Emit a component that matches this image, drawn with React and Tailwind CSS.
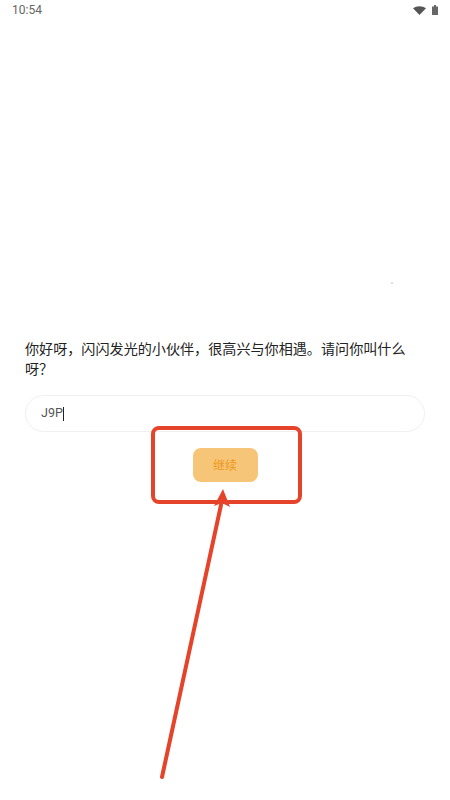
const App = () => {
  return (
    <div className="relative w-[450px] h-[800px] bg-white overflow-hidden font-['Roboto','Noto_Sans_CJK_SC',sans-serif]">
      {/* status bar */}
      <div className="flex items-center justify-between h-5 pl-3 pr-3 text-[#666666] text-xs">
        <span>10:54</span>
        <div className="flex items-center gap-[6px]">
          <svg width="13" height="9" viewBox="0 0 13 9">
            <path d="M0 2.3 C3.5 -0.6 9.5 -0.6 13 2.3 L6.5 9 Z" fill="#555555" />
          </svg>
          <svg width="6" height="10" viewBox="0 0 6 10">
            <path d="M2 0 H4 V1.5 H6 V10 H0 V1.5 H2 Z" fill="#666666" />
          </svg>
        </div>
      </div>

      <div className="px-[25px] pt-[320px]">
        <p className="text-[14.1px] leading-5 text-[#222222] -mt-px">
          你好呀，闪闪发光的小伙伴，很高兴与你相遇。请问你叫什么呀？
        </p>

        <div className="flex items-center h-[37px] mt-4 pl-[15px] rounded-full border border-[#f0f0f0] text-[12.5px] text-[#555555]">
          J9P
          <span className="w-[1.5px] h-[14px] bg-[#222222]"></span>
        </div>

        <div className="flex justify-center mt-4">
          <button className="w-[65px] h-[34px] pt-[2px] rounded-lg bg-[#f6c578] text-xs text-[#ee9a20]">
            继续
          </button>
        </div>
      </div>

      {/* red annotation */}
      <div className="absolute left-[151px] top-[426px] w-[151px] h-[78px] rounded-lg border-4 border-[#e5432a]"></div>
      <svg className="absolute inset-0" width="450" height="800" viewBox="0 0 450 800">
        <path d="M162 777 L221 505" stroke="#e5432a" strokeWidth="4" strokeLinecap="round" fill="none" />
        <path d="M223 489 L230 507 L222 503 L214 506 Z" fill="#e5432a" />
        <circle cx="392" cy="283" r="0.5" fill="#555555" />
      </svg>
    </div>
  );
};

export default App;
